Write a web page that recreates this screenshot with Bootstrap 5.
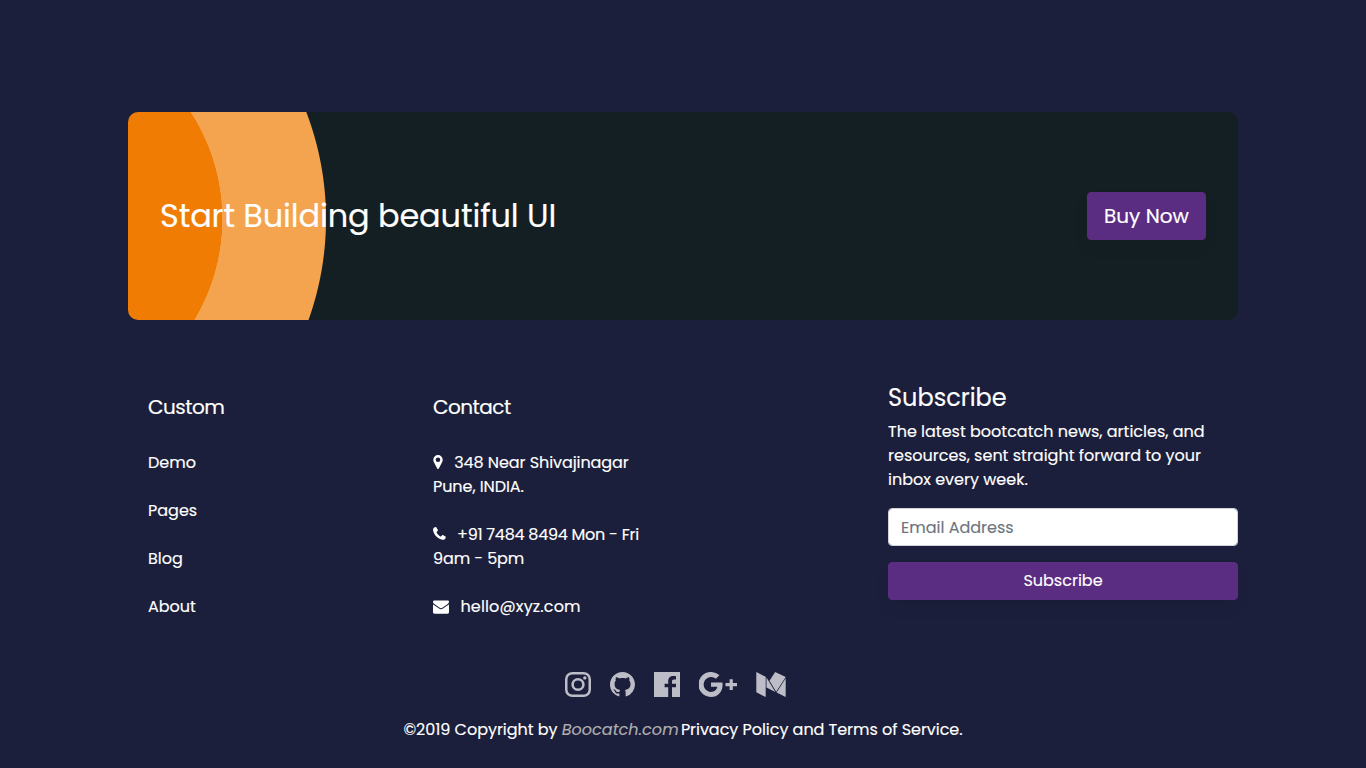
<!DOCTYPE html>
<html lang="en">
<head>
<meta charset="utf-8">
<meta name="viewport" content="width=device-width, initial-scale=1">
<title>Bootcatch</title>
<link href="https://cdn.jsdelivr.net/npm/bootstrap@5.3.0/dist/css/bootstrap.min.css" rel="stylesheet">
<script src="https://cdn.jsdelivr.net/npm/bootstrap@5.3.0/dist/js/bootstrap.bundle.min.js" defer></script>
<style>
  body { background: #1c1f3b; color: #fff; font-family: Poppins, Inter, "Open Sans", sans-serif; font-size: 16px; line-height: 24px; overflow: hidden; -webkit-text-stroke: .15px; }
  .container, .row { --bs-gutter-x: 30px; }
  .page-foot { padding-top: 112px; height: 766px; }
  .cta { height: 208px; border-radius: 10px; padding: 0 32px; background: radial-gradient(circle at -102px 107px, #f07c04 196px, #f4a44f 196.5px, #f4a44f 299.500px, #141f24 300.500px); }
  .cta-title { font-size: 32px; line-height: 38px; font-weight: 400; letter-spacing: -.15px; }
  .btn-plum { --bs-btn-bg: #5a2d82; --bs-btn-color: #fff; --bs-btn-border-color: #5a2d82; --bs-btn-hover-bg: #4c2570; --bs-btn-hover-color: #fff; border-radius: 4px; box-shadow: 0 8px 16px rgba(0,0,0,.05); }
  .btn-buy { width: 119px; height: 48px; font-size: 20px; padding: 0; }
  .foot-cols { margin-top: 63px; }
  .foot-head { font-size: 20px; line-height: 24px; font-weight: 400; margin: 12px 0 32px; letter-spacing: -.5px; }
  .foot-list { padding-left: 20px; }
  .foot-list p { margin-bottom: 24px; white-space: nowrap; }
  .foot-list svg { fill: #fff; margin-right: 7px; }
  .pin { vertical-align: -1px; }
  .tel { vertical-align: 0; }
  .mail { vertical-align: -2px; }
  .ls-addr { letter-spacing: -.07px; }
  .ls-tel { letter-spacing: -.26px; }
  .ls-tel span { letter-spacing: -.1px; }
  .ls-mail { letter-spacing: .16px; }
  .sub-head { font-size: 24px; line-height: 29px; font-weight: 400; margin-bottom: 8px; }
  .sub-text { margin-bottom: 16px; white-space: nowrap; }
  .email { height: 38px; border-radius: 4px; border-color: #ced4da; margin-bottom: 16px; }
  .email::placeholder { color: #6c757d; }
  .social { fill: #bdbdc7; height: 26px; margin-top: 53px; padding-right: 15px; gap: 19px; }
  .legal { line-height: 24px; margin-top: 20px; white-space: nowrap; letter-spacing: -.04px; }
  .legal em { color: #b0aeb1; letter-spacing: .05px; margin-right: -2px; }
</style>
</head>
<body>
<footer class="page-foot">
  <div class="container">
    <section class="cta d-flex align-items-center justify-content-between">
      <h2 class="cta-title mb-0">Start Building beautiful UI</h2>
      <button class="btn btn-plum btn-buy">Buy Now</button>
    </section>
    <div class="row foot-cols">
      <div class="col-3"><div class="foot-list">
        <h5 class="foot-head">Custom</h5>
        <p>Demo</p>
        <p>Pages</p>
        <p>Blog</p>
        <p class="mb-0">About</p>
      </div></div>
      <div class="col-3"><div class="foot-list">
        <h5 class="foot-head">Contact</h5>
        <p class="ls-addr"><svg class="pin" width="10" height="14" viewBox="0 0 10 14"><path fill-rule="evenodd" d="M5 0a4.700 4.700 0 0 1 4.700 4.700c0 1-.2 1.600-.5 2.200L5.800 13.500q-.8 1-1.600 0L.8 6.900C.5 6.300.3 5.700.3 4.700A4.700 4.700 0 0 1 5 0zm0 2.400a2.300 2.300 0 1 0 0 4.600 2.300 2.300 0 0 0 0-4.600z"/></svg> 348 Near Shivajinagar<br>Pune, INDIA.</p>
        <p class="ls-tel"><svg class="tel" width="13" height="13" viewBox="0 0 13 13"><path d="M12.800 10.100c0 .7-.3 1.500-.8 1.900-.7.700-1.700 1-2.600.8C4.700 11.700 1.100 8 .1 3.500-.1 2.400.3 1.200 1.100.6 1.600.2 2.300 0 2.900 0c.3 0 .4.200.5.400l1.500 2.600c.2.500 0 .8-.3 1l-.9.900c-.3.300-.2.500-.1.700.9 1.700 2.200 3 3.900 3.900.3.200.5.100.7-.1l.9-1.100c.2-.3.500-.4.800-.2l2.500 1.500c.3.100.4.300.4.500z"/></svg> +91 7484 8494 Mon - Fri<br><span>9am - 5pm</span></p>
        <p class="mb-0 ls-mail"><svg class="mail" width="16" height="14" viewBox="0 0 16 14"><path d="M1.400.5h13.200c.9 0 1.400.5 1.400 1.300 0 .8-.6 1.600-1.300 2.100L9.700 7.400C9 7.900 8.600 8.200 8 8.200s-1-.3-1.700-.8L1.300 3.900C.6 3.400 0 2.600 0 1.900 0 1.100.5.500 1.400.5zM0 4.200q.4.500.9.800L5.700 8.300C6.500 8.900 7.200 9.300 8 9.300s1.500-.4 2.300-1L15.100 5q.5-.3.900-.8v8.100c0 .8-.6 1.400-1.400 1.400H1.400C.6 13.700 0 13.100 0 12.300z"/></svg> hello@xyz.com</p>
      </div></div>
      <div class="col-4 offset-2">
        <h4 class="sub-head">Subscribe</h4>
        <p class="sub-text">The latest bootcatch news, articles, and<br>resources, sent straight forward to your<br>inbox every week.</p>
        <input type="email" class="form-control email" placeholder="Email Address">
        <button class="btn btn-plum w-100">Subscribe</button>
      </div>
    </div>
    <div class="social d-flex justify-content-center align-items-start">
      <svg width="26" height="25" viewBox="0 0 26 26" preserveAspectRatio="none"><path fill-rule="evenodd" d="M7.500 0h11A7.500 7.500 0 0 1 26 7.500v11a7.500 7.500 0 0 1-7.500 7.500h-11A7.500 7.500 0 0 1 0 18.500v-11A7.500 7.500 0 0 1 7.500 0zm0 2.500a5 5 0 0 0-5 5v11a5 5 0 0 0 5 5h11a5 5 0 0 0 5-5v-11a5 5 0 0 0-5-5z"/><path fill-rule="evenodd" d="M13 6.300a6.700 6.700 0 1 1 0 13.400 6.700 6.700 0 0 1 0-13.400zm0 2.600a4.100 4.100 0 1 0 0 8.200 4.100 4.100 0 0 0 0-8.200z"/><circle cx="19.800" cy="6.200" r="1.700"/></svg>
      <svg width="25" height="25" viewBox="0 0 16 16"><path d="M8 0C3.580 0 0 3.580 0 8c0 3.540 2.290 6.530 5.470 7.590.4.070.55-.17.55-.38 0-.19-.01-.82-.01-1.490-2.010.37-2.530-.49-2.690-.94-.09-.23-.48-.94-.82-1.130-.28-.15-.68-.52-.01-.53.63-.01 1.080.58 1.230.82.72 1.210 1.870.87 2.330.66.07-.52.28-.87.51-1.070-1.780-.2-3.640-.89-3.640-3.950 0-.87.31-1.590.82-2.150-.08-.2-.36-1.020.08-2.120 0 0 .67-.21 2.200.82.640-.18 1.320-.27 2-.27s1.360.09 2 .27c1.530-1.040 2.200-.82 2.200-.82.440 1.100.16 1.920.08 2.120.51.560.82 1.270.82 2.150 0 3.070-1.870 3.750-3.650 3.950.290.250.540.730.540 1.480 0 1.070-.01 1.930-.01 2.200 0 .21.150.460.550.380A8.010 8.010 0 0 0 16 8c0-4.420-3.580-8-8-8z"/></svg>
      <svg width="26" height="25" viewBox="0 0 26 25"><path d="M0 0h26v25h-8v-9.700h4v-3.600h-4V9.600c0-1.200.6-2 2-2h2V4.200c-.8-.1-1.500-.2-2.500-.2-3.300 0-5.300 1.900-5.300 5.200v2.500h-3.600v3.600h3.600V25H0z"/></svg>
      <svg width="38" height="25" viewBox="0 0 38 25"><path d="M12 10.500h11.300c.2.700.3 1.400.3 2.200C23.600 19.800 18.900 25 12 25A12.500 12.500 0 1 1 20.400 3.300l-3.600 3.500A7.400 7.400 0 1 0 12 19.900c3.500 0 5.800-2 6.400-5.100H12zM30.600 7.200h3.200v3.700H38v3.300h-4.200v3.900h-3.200v-3.900h-4.100v-3.300h4.100z"/></svg>
      <svg width="30" height="25" viewBox="0 0 30 25"><path d="M.3 0 9.700 4.800V25L.3 20.300zM10.500 5.500 19.300 19.900l-8.800-4.300zM19.200 0 29.700 5 20.200 19.800 13.500 8.800zM29.700 6.200V25l-9.100-4.600z"/></svg>
    </div>
    <p class="legal text-center mb-0">©2019 Copyright by <em>Boocatch.com</em> Privacy Policy and Terms of Service.</p>
  </div>
</footer>
</body>
</html>
